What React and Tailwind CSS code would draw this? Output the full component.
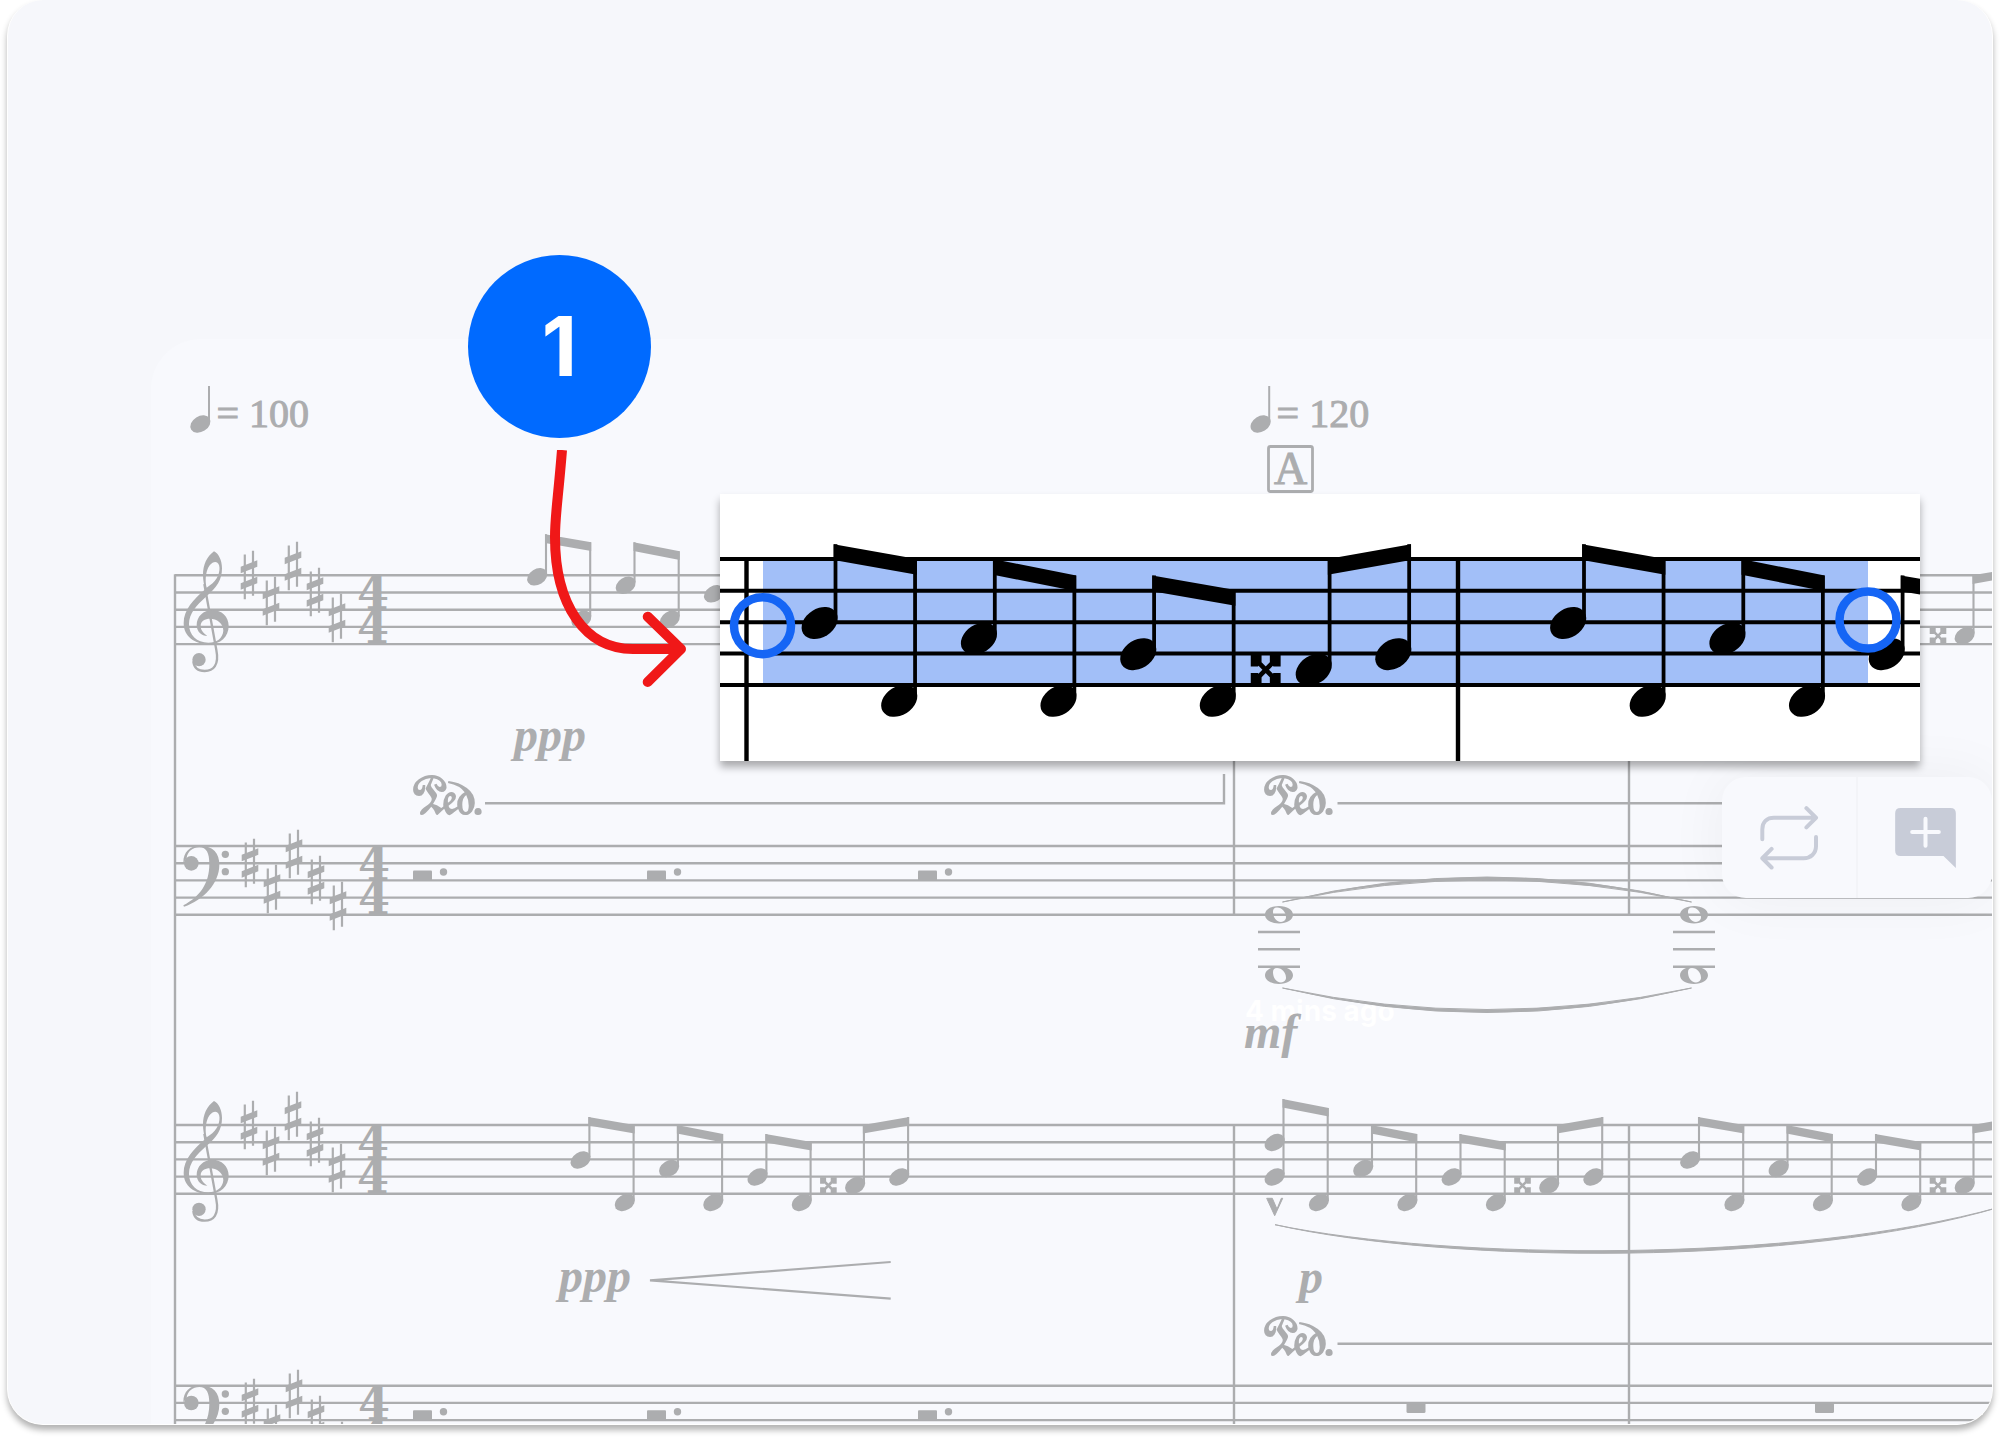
const SHARPS = [[0, 0], [22, 26], [44, -9], [66, 17], [88, 43]];

// One bar of beamed eighths, origin at the first stem and the top staff line
const PAIRS = [
  { x: 0, heads: [35, 77.5], top: [-8, 0] },
  { x: 88.5, heads: [43.5, 77.5], top: [0, 9] },
  { x: 177, heads: [52, 77.5], top: [9, 17] },
  { x: 274.5, heads: [60.5, 52], top: [0, -8] },
];

function Head({ x, y }) {
  return <ellipse cx={x} cy={y} rx="10.8" ry="7.8" transform={`rotate(-32 ${x} ${y})`} />;
}

function Pair({ x, heads, top }) {
  return (
    <g>
      <Head x={x - 8.8} y={heads[0]} />
      <Head x={x + 35.4} y={heads[1]} />
      <path
        d={`M${x} ${heads[0] - 3}V${top[0]}M${x + 44.2} ${heads[1] - 3}V${top[1]}`}
        stroke="currentColor"
        strokeWidth="2.1"
      />
      <path d={`M${x - 1} ${top[0]}L${x + 45.2} ${top[1]}v8.6L${x - 1} ${top[0] + 8.6}z`} />
    </g>
  );
}

function DoubleSharp({ x, y }) {
  return (
    <g transform={`translate(${x} ${y})`}>
      <path d="M-5 -5L5 5M5 -5L-5 5" stroke="currentColor" strokeWidth="2.6" />
      <path d="M-8.3 -8.3h6v4l-2 2.5h-4zM8.3 -8.3h-6v4l2 2.5h4zM-8.3 8.3h6v-4l-2 -2.5h-4zM8.3 8.3h-6v-4l2 -2.5h4z" />
    </g>
  );
}

function Bar({ from = 0 }) {
  return (
    <g>
      {PAIRS.slice(from).map((pair) => (
        <Pair key={pair.x} {...pair} />
      ))}
      <DoubleSharp x={239} y={60.5} />
    </g>
  );
}

function Staff({ y, lines = 5 }) {
  return (
    <g stroke="currentColor" strokeWidth="2.4">
      {[0, 17.2, 34.4, 51.6, 68.8].slice(0, lines).map((dy) => (
        <path key={dy} d={`M175 ${y + dy}H1993`} />
      ))}
    </g>
  );
}

function KeySignature({ x, y }) {
  return SHARPS.map(([dx, dy]) => (
    <g key={dx} transform={`translate(${x + dx} ${y + dy})`}>
      <path d="M-4.2 -20.5V24.3M4 -24.3V20.8" stroke="currentColor" strokeWidth="2.2" />
      <path d="M-8.3 -8.3L8.3 -14.7V-8.2L-8.3 -1.7zM-8.3 8.2L8.3 1.7V8.2L-8.3 14.7z" />
    </g>
  ));
}

function TimeSignature({ x, y }) {
  return (
    <g className="font-['DejaVu_Serif',serif] text-[46px] font-bold" textAnchor="middle">
      <text x={x} y={y + 34}>4</text>
      <text x={x} y={y + 68}>4</text>
    </g>
  );
}

function TrebleClef({ y }) {
  return (
    <g transform={`translate(0 ${y}) scale(.33333) translate(0 -766)`}>
      <path
        fillRule="evenodd"
        d="M616 808C580 838 551 870 551 910C551 950 585 973 625 973C662 973 686 950 686 917C686 890 665 870 637 870C610 870 590 890 590 915C590 935 605 948 622 948C612 940 602 932 602 918C602 903 615 896 630 896C650 896 670 910 670 932C668 955 650 968 625 968C590 968 567 945 567 912C567 880 590 855 618 830C650 803 666 780 666 745C666 720 655 700 642 694C620 710 609 735 609 765C609 780 612 795 616 808ZM620 803C612 770 622 728 646 726C662 727 662 755 650 775C643 787 632 795 620 803Z"
      />
      <path
        d="M613 792L649 990C658 1035 640 1053 614 1053C594 1053 582 1042 580 1024"
        fill="none"
        stroke="currentColor"
        strokeWidth="7"
      />
      <circle cx="597" cy="1019" r="20" />
    </g>
  );
}

function BassClef({ y }) {
  return (
    <g transform={`translate(160 ${y}) scale(.33333) translate(0 -258)`}>
      <path d="M70 308C70 275 90 257 120 257C160 257 178 280 178 314C178 370 130 420 72 440L70 436C120 410 148 370 148 312C148 280 140 262 118 262C98 262 82 275 80 295Z" />
      <circle cx="94" cy="310" r="22" />
      <circle cx="196" cy="283" r="11" />
      <circle cx="196" cy="335" r="11" />
    </g>
  );
}

function DottedRests({ y }) {
  return [413, 647, 918].map((x) => (
    <g key={x}>
      <rect x={x} y={y + 24.5} width="19" height="10" rx="1" />
      <circle cx={x + 30.5} cy={y + 26} r="3.7" />
    </g>
  ));
}

function WholeNotes({ x }) {
  return (
    <g>
      {[914.7, 975.3].map((y) => (
        <g key={y} transform={`translate(${x} ${y})`}>
          <path
            fillRule="evenodd"
            d="M-14 0C-14 -5 -8 -8.7 0 -8.7S14 -5 14 0S8 8.7 0 8.7S-14 5 -14 0ZM-6 -3C-6 2 -3 7.2 2 7.2C5 7.2 7 5 7 2.5C7 -2.5 3 -7.2 -2 -7.2C-5 -7.2 -6 -5.5 -6 -3Z"
          />
        </g>
      ))}
      <path
        d={`M${x - 21} 932h42M${x - 21} 949.3h42M${x - 21} 966.7h42`}
        stroke="currentColor"
        strokeWidth="2.4"
      />
    </g>
  );
}

function Tempo({ x, bpm }) {
  return (
    <g>
      <Head x={x} y={424} />
      <path d={`M${x + 8.6} 422V386`} stroke="currentColor" strokeWidth="2" />
      <text x={x + 16} y="427" stroke="currentColor" strokeWidth="1" className="font-['Liberation_Serif',serif] text-[40px]">
        = {bpm}
      </text>
    </g>
  );
}

function Pedal({ x, y }) {
  return (
    <text x={x} y={y} className="font-[serif] text-[110px]">
      𝆮
    </text>
  );
}

function Score() {
  return (
    <svg viewBox="151 339 1841 1085" className="block w-full text-[#acadaf]" fill="currentColor">
      <text x="1245" y="1021" className="fill-white font-['Inter',sans-serif] text-[28px] font-bold">
        4 mins ago
      </text>

      <Staff y={575.3} />
      <Staff y={846} />
      <Staff y={1125} />
      <Staff y={1385.7} lines={3} />
      <path
        d="M175 574.3V1425M1234 575V915M1629 575V915M1234 1125V1425M1629 1125V1425"
        stroke="currentColor"
        strokeWidth="2.4"
      />

      <TrebleClef y={575.3} />
      <KeySignature x={249} y={575} />
      <TimeSignature x={373} y={575.3} />
      <BassClef y={846} />
      <KeySignature x={250} y={863} />
      <TimeSignature x={374} y={846} />
      <TrebleClef y={1125} />
      <KeySignature x={249} y={1125} />
      <TimeSignature x={373} y={1125} />
      <BassClef y={1385.7} />
      <KeySignature x={250} y={1403} />
      <TimeSignature x={374} y={1385.7} />

      <Tempo x={200.4} bpm={100} />
      <Tempo x={1260.6} bpm={120} />
      <rect x="1268.5" y="446.5" width="44" height="45" rx="2" fill="none" stroke="currentColor" strokeWidth="2.8" />
      <text x="1290.5" y="484" textAnchor="middle" stroke="currentColor" strokeWidth="1" className="font-['Liberation_Serif',serif] text-[46px]">
        A
      </text>

      <g transform="translate(546 575.3)">
        <Pair x={0} heads={[1.5, 44]} top={[-41, -33]} />
        <Pair x={88.5} heads={[10, 44]} top={[-33, -24]} />
        <Head x={168} y={18.5} />
      </g>
      <g transform="translate(1699 575.3)">
        <Bar from={3} />
      </g>
      <g transform="translate(589.4 1125)">
        <Bar />
      </g>
      <g transform="translate(1283.5 1125)">
        <Pair x={0} heads={[52, 77.5]} top={[-26, -17]} />
        <Head x={-8.8} y={17.5} />
        <Bar from={1} />
      </g>
      <g transform="translate(1699 1125)">
        <Bar />
      </g>

      <DottedRests y={846} />
      <DottedRests y={1385.7} />
      <rect x="1406.5" y="1403" width="19" height="10" rx="1.5" />
      <rect x="1815" y="1403" width="19" height="10" rx="1.5" />

      <WholeNotes x={1279} />
      <WholeNotes x={1694} />
      <g stroke="currentColor" strokeLinejoin="round">
        <path d="M1282.5 902Q1487 852 1691.5 902Q1487 858 1282.5 902Z" />
        <path d="M1282.5 988Q1487 1037 1691.5 988Q1487 1031 1282.5 988Z" />
        <path d="M1275 1224.7C1450 1264 1800 1267 2000 1207C1800 1263 1450 1261 1275 1224.7Z" />
      </g>
      <path d="M1266.7 1198.3h5.6L1277 1209L1281.3 1198.3h1.4L1274.7 1215.7Z" stroke="currentColor" />
      <path d="M890.7 1262L650 1280.3L890.7 1298.7" fill="none" stroke="currentColor" strokeWidth="2.2" />

      <g className="font-['Liberation_Serif',serif] text-[48px] font-bold italic">
        <text x="514" y="751">ppp</text>
        <text x="1271" y="751">p</text>
        <text x="1244" y="1048">mf</text>
        <text x="559" y="1292">ppp</text>
        <text x="1299" y="1293">p</text>
      </g>

      <Pedal x={411} y={849} />
      <Pedal x={1262} y={849} />
      <Pedal x={1262} y={1390} />
      <path
        d="M485 803.3H1224V774M1337.5 803.3H1993M1337.5 1343.7H1993"
        fill="none"
        stroke="currentColor"
        strokeWidth="2.4"
      />
    </svg>
  );
}

function Selection() {
  return (
    <div className="absolute left-[569px] top-[155px] bg-white shadow-[0_6px_8px_rgba(0,0,0,0.32)]">
      <svg viewBox="720 494 1200 267" className="block w-[1200px] text-black" fill="currentColor">
        <rect x="763" y="559" width="1105" height="126" className="fill-[#a2bff8]" />
        <path
          d="M720 559H1920M720 590.7H1920M720 622.3H1920M720 653.5H1920M720 685H1920"
          stroke="currentColor"
          strokeWidth="4"
        />
        <path d="M746.5 559V761M1458 559V761" stroke="currentColor" strokeWidth="4.4" />
        <g transform="translate(835.5 559) scale(1.8 1.83)">
          <Bar />
        </g>
        <g transform="translate(1584 559) scale(1.8 1.83)">
          <Bar />
        </g>
        <g fill="none" className="stroke-[#1565f5]" strokeWidth="8.5">
          <circle cx="762.5" cy="625.7" r="28.5" />
          <circle cx="1868" cy="620" r="28.5" />
        </g>
      </svg>
    </div>
  );
}

function Toolbar() {
  return (
    <div className="absolute right-0 top-[438px] flex h-[121px] w-[270px] divide-x-2 divide-[#f3f4f8] rounded-[24px] bg-[#f8f9fd] text-[#c8ccd8] shadow-[0_0_60px_rgba(0,0,0,0.05)]">
      <button aria-label="Loop" className="flex flex-1 items-center justify-center">
        <svg viewBox="177 159 187 204" className="h-[68px] w-[62px]" fill="none" stroke="currentColor" strokeWidth="12" strokeLinecap="round" strokeLinejoin="round">
          <path d="M190 265V235C190 212 205 200 225 200H352M323 171L352 200L323 229M352 258V285C352 308 335 322 315 322H190M218 294L190 322L218 350" />
        </svg>
      </button>
      <button aria-label="Add comment" className="flex flex-1 items-center justify-center">
        <svg viewBox="586 171 182 180" className="h-[60px] w-[61px]" fill="currentColor">
          <path d="M602 171H752Q768 171 768 187V351L731 315H602Q586 315 586 299V187Q586 171 602 171Z" />
          <path d="M677 203V284M637 243H717" className="stroke-[#f8f9fd]" strokeWidth="12" strokeLinecap="round" />
        </svg>
      </button>
    </div>
  );
}

function Callout() {
  return (
    <>
      <div className="absolute left-[460px] top-[255px] flex size-[183px] items-center justify-center rounded-full bg-[#006aff] font-['Inter',sans-serif] text-[82px] font-bold leading-none text-white">
        1
      </div>
      <svg
        viewBox="540 450 160 250"
        className="absolute left-[532px] top-[450px] h-[250px] w-[160px] text-[#f01818]"
        fill="none"
        stroke="currentColor"
        strokeWidth="10"
        strokeLinejoin="round"
      >
        <path d="M562 450C558 500 555 515 555 537C555 605 585 649 633 649H681" />
        <path d="M647.7 616.7L681 649L647.7 682" strokeLinecap="round" />
      </svg>
    </>
  );
}

export default function App() {
  return (
    <main className="min-h-screen bg-white px-[7px] pb-[14px]">
      <div className="relative overflow-hidden rounded-[36px] border border-t-0 border-white bg-[#f6f7fb] pl-[143px] pt-[339px] shadow-[0_5px_6px_rgba(0,0,0,0.3)]">
        <section className="relative rounded-tl-[50px] bg-[#f8f9fd]">
          <Score />
          <Toolbar />
          <Selection />
        </section>
        <Callout />
      </div>
    </main>
  );
}
